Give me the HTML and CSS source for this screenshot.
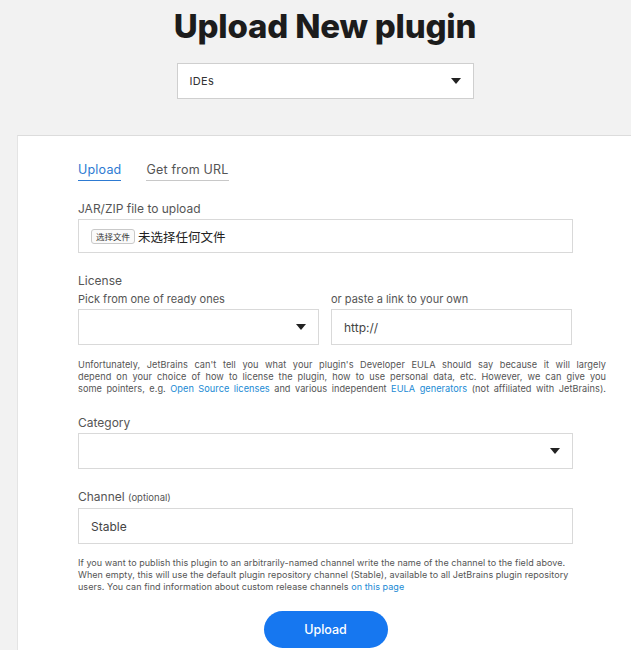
FILE: index.html
```html
<!DOCTYPE html>
<html lang="en">
<head>
    <meta charset="UTF-8">
    <meta name="viewport" content="width=device-width, initial-scale=1.0">
    <title>Upload New plugin</title>
    <link rel="stylesheet" href="styles.css">
</head>
<body>
    <div class="page">
        <h1>Upload New plugin</h1>
        <div class="select family">
            <span>IDEs</span>
            <span class="arrow"></span>
        </div>

        <div class="card">
            <div class="tabs">
                <span class="tab active">Upload</span>
                <span class="tab">Get from URL</span>
            </div>

            <label class="label">JAR/ZIP file to upload</label>
            <div class="field file">
                <span class="file-btn">选择文件</span>
                <span class="file-name">未选择任何文件</span>
            </div>

            <label class="label section">License</label>
            <div class="two-cols">
                <div>
                    <div class="sublabel">Pick from one of ready ones</div>
                    <div class="field select"><span></span><span class="arrow"></span></div>
                </div>
                <div>
                    <div class="sublabel">or paste a link to your own</div>
                    <div class="field input">http://</div>
                </div>
            </div>
            <p class="note wide">Unfortunately, JetBrains can't tell you what your plugin's Developer EULA should say because it will largely<br>
                depend on your choice of how to license the plugin, how to use personal data, etc. However, we can give you<br>
                some pointers, e.g. <a href="#">Open Source licenses</a> and various independent <a href="#">EULA generators</a> (not affiliated with JetBrains).</p>

            <label class="label section">Category</label>
            <div class="field select"><span></span><span class="arrow"></span></div>

            <label class="label section">Channel <small>(optional)</small></label>
            <div class="field input">Stable</div>
            <p class="note">If you want to publish this plugin to an arbitrarily-named channel write the name of the channel to the field above.<br>
                When empty, this will use the default plugin repository channel (Stable), available to all JetBrains plugin repository<br>
                users. You can find information about custom release channels <a href="#">on this page</a></p>

            <div class="actions">
                <button class="upload">Upload</button>
            </div>
        </div>
    </div>
</body>
</html>
```

FILE: styles.css
```css
body {
    margin: 0;
    background: #f2f2f2;
    font-family: Inter, 'Liberation Sans', Arial, sans-serif;
    color: #555;
    overflow: hidden;
}
.page {
    width: 650px;
}
h1 {
    margin: 0;
    padding-top: 8px;
    text-align: center;
    font-size: 33px;
    line-height: 36px;
    font-weight: 800;
    color: #1c1c1c;
    letter-spacing: -0.2px;
}
.select {
    display: flex;
    align-items: center;
    justify-content: space-between;
    background: #fff;
    border: 1px solid #cfcfcf;
    box-sizing: border-box;
    height: 36px;
    padding: 0 12px 0 12px;
}
.family {
    width: 297px;
    margin: 19px auto 0;
    font-size: 11px;
    color: #333;
    letter-spacing: 0.3px;
}
.arrow {
    width: 0;
    height: 0;
    border-left: 5.5px solid transparent;
    border-right: 5.5px solid transparent;
    border-top: 6px solid #222;
}
.card {
    background: #fff;
    border-top: 1px solid #dcdcdc;
    border-left: 1px solid #e4e4e4;
    margin: 36px 0 0 17px;
    width: 616px;
    height: 560px;
    box-sizing: border-box;
    padding: 26px 60px 0 60px;
}
.tabs {
    display: flex;
    gap: 25px;
}
.tab {
    font-size: 12.5px;
    line-height: 16px;
    padding-bottom: 2px;
    border-bottom: 1px solid #c8c8c8;
    color: #555;
    letter-spacing: 0.2px;
}
.tab.active {
    color: #2d7ad2;
    border-bottom-color: #2d7ad2;
}
.label {
    display: block;
    font-size: 12px;
    line-height: 16px;
    margin: 20px 0 2px;
    color: #555;
}
.label small {
    font-size: 9.5px;
}
.field {
    background: #fff;
    border: 1px solid #d9d9d9;
    box-sizing: border-box;
    height: 36px;
}
.file {
    height: 34px;
    display: flex;
    align-items: center;
    padding-left: 12px;
}
.file-btn {
    font-family: 'Noto Sans CJK SC', sans-serif;
    font-size: 8.5px;
    line-height: 11px;
    color: #333;
    border: 1px solid #c9c9c9;
    border-radius: 3px;
    padding: 1px 4px;
    margin-right: 3px;
    background: #fafafa;
}
.file-name {
    font-family: 'Noto Sans CJK SC', sans-serif;
    font-size: 12.5px;
    color: #222;
}
.two-cols {
    display: grid;
    grid-template-columns: 241px 241px;
    gap: 12px;
}
.sublabel {
    font-size: 11px;
    line-height: 14px;
    margin: 1px 0 3px;
    color: #555;
}
.input {
    display: flex;
    align-items: center;
    padding-left: 12px;
    font-size: 12px;
    color: #444;
}
.note {
    font-size: 9px;
    line-height: 12px;
    letter-spacing: 0.05px;
    color: #555;
    margin: 13px 0 0;
    width: 500px;
    white-space: nowrap;
}
.note.wide {
    width: 528px;
    margin-top: 14px;
    font-size: 9.2px;
    white-space: normal;
    text-align: justify;
    text-align-last: justify;
}
.note a {
    color: #1a8ad4;
    text-decoration: none;
}
.actions {
    display: flex;
    justify-content: center;
    margin-top: 18px;
}
.upload {
    width: 124px;
    height: 37px;
    border: none;
    border-radius: 19px;
    background: #1677f0;
    color: #fff;
    font-family: Inter, sans-serif;
    font-size: 12.5px;
    font-weight: 500;
    cursor: pointer;
}
```
